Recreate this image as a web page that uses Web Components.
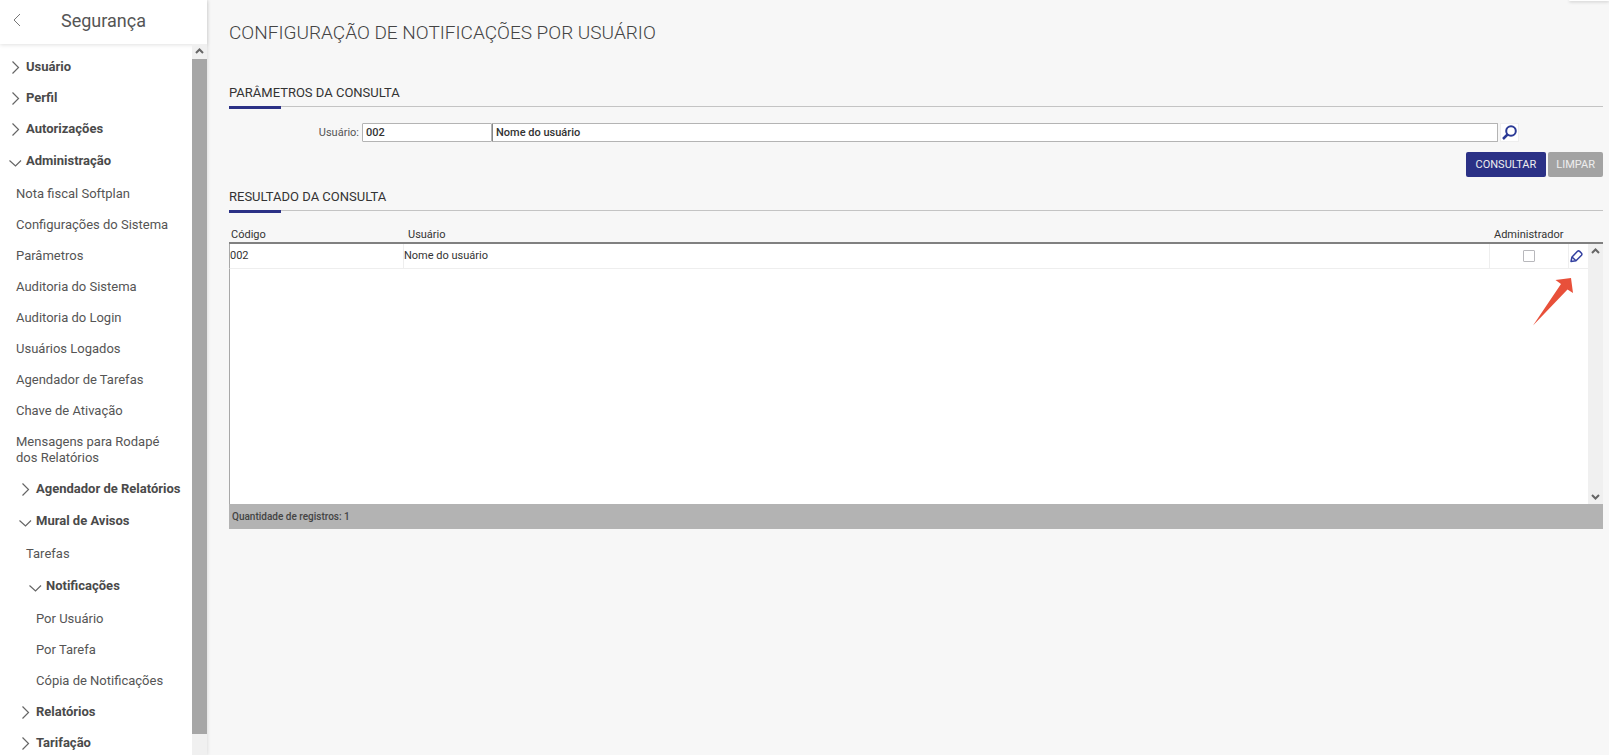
<!DOCTYPE html>
<html lang="pt-BR">
<head>
<meta charset="utf-8">
<title>Segurança</title>
<style>
  html, body { height: 100%; }
  body {
    margin: 0;
    overflow: hidden;
    background: #f7f7f7;
    font-family: Roboto, "Liberation Sans", sans-serif;
    color: #444;
  }
</style>
</head>
<body>
<app-shell>
  <side-menu slot="menu" titulo="Segurança">
    <menu-group label="Usuário"></menu-group>
    <menu-group label="Perfil"></menu-group>
    <menu-group label="Autorizações"></menu-group>
    <menu-group label="Administração" open>
      <menu-link>Nota fiscal Softplan</menu-link>
      <menu-link>Configurações do Sistema</menu-link>
      <menu-link>Parâmetros</menu-link>
      <menu-link>Auditoria do Sistema</menu-link>
      <menu-link>Auditoria do Login</menu-link>
      <menu-link>Usuários Logados</menu-link>
      <menu-link>Agendador de Tarefas</menu-link>
      <menu-link>Chave de Ativação</menu-link>
      <menu-link>Mensagens para Rodapé dos Relatórios</menu-link>
      <menu-group label="Agendador de Relatórios"></menu-group>
      <menu-group label="Mural de Avisos" open>
        <menu-link>Tarefas</menu-link>
        <menu-group label="Notificações" open>
          <menu-link>Por Usuário</menu-link>
          <menu-link>Por Tarefa</menu-link>
          <menu-link>Cópia de Notificações</menu-link>
        </menu-group>
      </menu-group>
      <menu-group label="Relatórios"></menu-group>
      <menu-group label="Tarifação"></menu-group>
    </menu-group>
  </side-menu>
  <page-title>CONFIGURAÇÃO DE NOTIFICAÇÕES POR USUÁRIO</page-title>
  <page-section titulo="PARÂMETROS DA CONSULTA">
    <query-form codigo="002" nome="Nome do usuário"></query-form>
  </page-section>
  <page-section titulo="RESULTADO DA CONSULTA">
    <result-table codigo="002" nome="Nome do usuário" total="1"></result-table>
  </page-section>
</app-shell>

<script>
class appShell extends HTMLElement {
  constructor() {
    super();
    this.attachShadow({ mode: "open" });
  }
  connectedCallback() {
    this.shadowRoot.innerHTML = `
      <style>
        :host {
          display: grid;
          grid-template-columns: 207px minmax(0, 1fr);
          height: 100vh;
        }
        main {
          position: relative;
          padding: 17px 6px 0 22px;
        }
        .tab {
          position: absolute;
          top: 0;
          right: 0;
          width: 40px;
          height: 1px;
          background: #fff;
          border-radius: 0 0 0 2px;
          box-shadow: 0 1px 3px rgba(0, 0, 0, 0.3);
        }
      </style>
      <slot name="menu"></slot>
      <main>
        <div class="tab"></div>
        <slot></slot>
      </main>
    `;
  }
}
customElements.define("app-shell", appShell);

class scrollBar extends HTMLElement {
  constructor() {
    super();
    this.attachShadow({ mode: "open" });
  }
  connectedCallback() {
    this.shadowRoot.innerHTML = `
      <style>
        :host {
          display: flex;
          flex-direction: column;
          width: 15px;
          height: 100%;
          background: #f0f0f0;
        }
        svg {
          display: block;
          flex: none;
          width: 15px;
          height: 15px;
          fill: none;
          stroke: #666;
          stroke-width: 2;
        }
        .track { flex: 1; }
        .thumb { height: 97%; background: #a6a6a6; }
        :host(:not([thumb])) .thumb { display: none; }
        :host([cut]) .down { display: none; }
      </style>
      <svg viewBox="0 0 15 15"><path d="M4 9l3.500-3.500L11 9"/></svg>
      <div class="track"><div class="thumb"></div></div>
      <svg class="down" viewBox="0 0 15 15"><path d="M4 6l3.500 3.500L11 6"/></svg>
    `;
  }
}
customElements.define("scroll-bar", scrollBar);

class sideMenu extends HTMLElement {
  constructor() {
    super();
    this.attachShadow({ mode: "open" });
  }
  connectedCallback() {
    this.shadowRoot.innerHTML = `
      <style>
        :host {
          display: flex;
          flex-direction: column;
          min-height: 0;
          background: #fff;
          box-shadow: 0 0 4px rgba(0, 0, 0, 0.15);
        }
        header {
          display: flex;
          align-items: center;
          flex: none;
          height: 44px;
          box-shadow: 0 1px 4px rgba(0, 0, 0, 0.12);
        }
        button {
          width: 32px;
          height: 36px;
          padding: 0 0 4px 8px;
          border: 0;
          background: none;
        }
        button svg { display: block; fill: none; stroke: #777; }
        h2 {
          flex: 1;
          margin: 0;
          padding: 0 32px 3px 0;
          text-align: center;
          font-size: 18px;
          line-height: 20px;
          font-weight: 400;
          color: #555;
        }
        .body { flex: 1; display: flex; min-height: 0; }
        nav { flex: 1; min-width: 0; padding-top: 7px; overflow: hidden; }
      </style>
      <header>
        <button aria-label="Voltar">
          <svg width="18" height="18" viewBox="0 0 18 18"><path d="M12 3L6 9L12 15"/></svg>
        </button>
        <h2>${this.getAttribute("titulo")}</h2>
      </header>
      <div class="body">
        <nav><slot></slot></nav>
        <scroll-bar thumb cut></scroll-bar>
      </div>
    `;
  }
}
customElements.define("side-menu", sideMenu);

class menuGroup extends HTMLElement {
  constructor() {
    super();
    this.attachShadow({ mode: "open" });
  }
  connectedCallback() {
    const open = this.hasAttribute("open");
    const arrow = open ? "M1.500 7.500L7.500 13L13 7.500" : "M4.500 2.500L10.500 8.500L4.500 14.500";
    this.shadowRoot.innerHTML = `
      <style>
        :host { display: block; }
        button {
          display: flex;
          align-items: center;
          gap: 4px;
          width: 100%;
          height: 31px;
          padding: 0 0 0 8px;
          border: 0;
          background: none;
          font: 700 13px/16px Roboto, "Liberation Sans", sans-serif;
          color: #4a4a4a;
          white-space: nowrap;
        }
        :host([open]) > button { height: 34px; }
        svg { flex: none; fill: none; stroke: #666; stroke-width: 1.2; }
        ::slotted(menu-group) { margin-left: 10px; }
      </style>
      <button aria-expanded="${open}">
        <svg width="14" height="16" viewBox="0 0 14 16"><path d="${arrow}"/></svg>
        ${this.getAttribute("label")}
      </button>
      <slot></slot>
    `;
  }
}
customElements.define("menu-group", menuGroup);

class menuLink extends HTMLElement {
  constructor() {
    super();
    this.attachShadow({ mode: "open" });
  }
  connectedCallback() {
    this.shadowRoot.innerHTML = `
      <style>
        :host { display: block; }
        a {
          display: block;
          padding: 8px 16px 7px 16px;
          font-size: 13px;
          line-height: 16px;
          color: #555;
          text-decoration: none;
        }
      </style>
      <a href="#"><slot></slot></a>
    `;
  }
}
customElements.define("menu-link", menuLink);

class pageTitle extends HTMLElement {
  constructor() {
    super();
    this.attachShadow({ mode: "open" });
  }
  connectedCallback() {
    this.shadowRoot.innerHTML = `
      <style>
        :host { display: block; margin-bottom: 35px; }
        h1 {
          margin: 0;
          font-size: 19px;
          line-height: 32px;
          font-weight: 300;
          color: #444;
        }
      </style>
      <h1><slot></slot></h1>
    `;
  }
}
customElements.define("page-title", pageTitle);

class pageSection extends HTMLElement {
  constructor() {
    super();
    this.attachShadow({ mode: "open" });
  }
  connectedCallback() {
    this.shadowRoot.innerHTML = `
      <style>
        :host { display: block; }
        h3 {
          margin: 0;
          padding-bottom: 4px;
          font-size: 13px;
          line-height: 18px;
          font-weight: 400;
          color: #333;
        }
        .line { height: 1px; padding-bottom: 2px; border-top: 1px solid #c4c4c4; }
        .line div { width: 52px; height: 3px; margin-top: -1px; background: #2b3186; }
      </style>
      <h3>${this.getAttribute("titulo")}</h3>
      <div class="line"><div></div></div>
      <slot></slot>
    `;
  }
}
customElements.define("page-section", pageSection);

class queryForm extends HTMLElement {
  constructor() {
    super();
    this.attachShadow({ mode: "open" });
  }
  connectedCallback() {
    this.shadowRoot.innerHTML = `
      <style>
        :host { display: block; padding: 13px 0 11px; }
        .field { display: flex; align-items: center; padding-right: 84px; }
        label {
          width: 130px;
          margin-right: 3px;
          text-align: right;
          font-size: 11px;
          line-height: 19px;
          color: #555;
        }
        input {
          box-sizing: border-box;
          height: 19px;
          padding: 0 3px;
          border: 1px solid #b4b4b4;
          border-radius: 1px;
          background: #fff;
          font: 500 11px/16px Roboto, "Liberation Sans", sans-serif;
          color: #333;
        }
        .code { width: 130px; }
        .name { flex: 1; min-width: 0; border-left-color: #888; }
        .search {
          width: 19px;
          height: 19px;
          margin: 0 0 0 2px;
          padding: 0;
          border: 1px solid #eee;
          background: #fff;
        }
        .search svg { display: block; fill: none; stroke: #2b3a96; stroke-width: 2; }
        .actions { display: flex; justify-content: flex-end; gap: 2px; margin-top: 10px; }
        .actions button {
          height: 25px;
          padding: 0 8px;
          border: 0;
          border-radius: 2px;
          background: #a3a3a3;
          font: 400 11px/16px Roboto, "Liberation Sans", sans-serif;
          color: #eee;
        }
        .actions .primary { padding: 0 10px; background: #2b3186; }
      </style>
      <div class="field">
        <label for="codigo">Usuário:</label>
        <input id="codigo" class="code" value="${this.getAttribute("codigo")}">
        <input class="name" aria-label="Nome" value="${this.getAttribute("nome")}">
        <button class="search" aria-label="Pesquisar">
          <svg width="17" height="17" viewBox="0 0 17 17"><circle cx="10" cy="7" r="4.800"/><path d="M6.500 10.500L2 15" stroke-width="2.500"/></svg>
        </button>
      </div>
      <div class="actions">
        <button class="primary">CONSULTAR</button>
        <button>LIMPAR</button>
      </div>
    `;
  }
}
customElements.define("query-form", queryForm);

class resultTable extends HTMLElement {
  constructor() {
    super();
    this.attachShadow({ mode: "open" });
  }
  connectedCallback() {
    this.shadowRoot.innerHTML = `
      <style>
        :host { display: block; padding-top: 8px; }
        table {
          width: 100%;
          table-layout: fixed;
          border-collapse: separate;
          border-spacing: 0;
          font-size: 11px;
          line-height: 14px;
          color: #333;
        }
        th, td { box-sizing: border-box; padding: 0; text-align: left; font-weight: 400; }
        th { height: 22px; padding: 6px 0 0 2px; border-bottom: 2px solid #808080; }
        th.gap { padding-left: 4px; }
        .row td { height: 25px; background: #fff; border-bottom: 1px solid #eee; border-right: 1px solid #eee; }
        .row td:first-child, .fill td { border-left: 1px solid #a8a8a8; }
        .row td.scroll { height: 1px; border: 0; }
        .scroll scroll-bar { height: 260px; }
        .fill td { height: 235px; background: #fff; }
        tfoot td { height: 25px; padding-left: 3px; background: #b3b3b3; font-size: 10px; font-weight: 500; color: #444; }
        input {
          appearance: none;
          box-sizing: border-box;
          display: block;
          width: 12px;
          height: 12px;
          margin: 0 auto;
          border: 1px solid #b8b8bc;
          border-radius: 1px;
          background: #fff;
        }
        .row .edit { position: relative; border-right: 0; }
        .edit button { display: block; padding: 0; border: 0; background: none; }
        .edit svg { display: block; }
        .edit .pointer { position: absolute; top: 34px; right: 15px; pointer-events: none; }
      </style>
      <table>
        <colgroup>
          <col style="width: 175px"><col><col style="width: 79px"><col style="width: 19px"><col style="width: 15px">
        </colgroup>
        <thead>
          <tr>
            <th>Código</th>
            <th class="gap">Usuário</th>
            <th class="gap" colspan="3">Administrador</th>
          </tr>
        </thead>
        <tbody>
          <tr class="row">
            <td>${this.getAttribute("codigo")}</td>
            <td>${this.getAttribute("nome")}</td>
            <td><input type="checkbox" aria-label="Administrador"></td>
            <td class="edit">
              <button aria-label="Editar">
                <svg width="16" height="16" viewBox="0 0 16 16" fill="none" stroke="#3340a0" stroke-width="1.500" stroke-linejoin="round">
                  <path d="M2 13.500L3 9L8.500 3.300Q9.500 2.400 10.700 3.400L12.500 5.200Q13.300 6.200 12.500 7.200L7 12.700Z"/>
                  <path d="M3 9L7 12.700"/>
                </svg>
              </button>
              <svg class="pointer" width="40" height="48" viewBox="0 0 40 48"><path fill="#e8503a" d="M0 47.500L28 6L22.500 2L38 0L40 15L34.500 11.500Z"/></svg>
            </td>
            <td class="scroll" rowspan="2"><scroll-bar></scroll-bar></td>
          </tr>
          <tr class="fill"><td colspan="4"></td></tr>
        </tbody>
        <tfoot>
          <tr><td colspan="5">Quantidade de registros: ${this.getAttribute("total")}</td></tr>
        </tfoot>
      </table>
    `;
  }
}
customElements.define("result-table", resultTable);
</script>
</body>
</html>
